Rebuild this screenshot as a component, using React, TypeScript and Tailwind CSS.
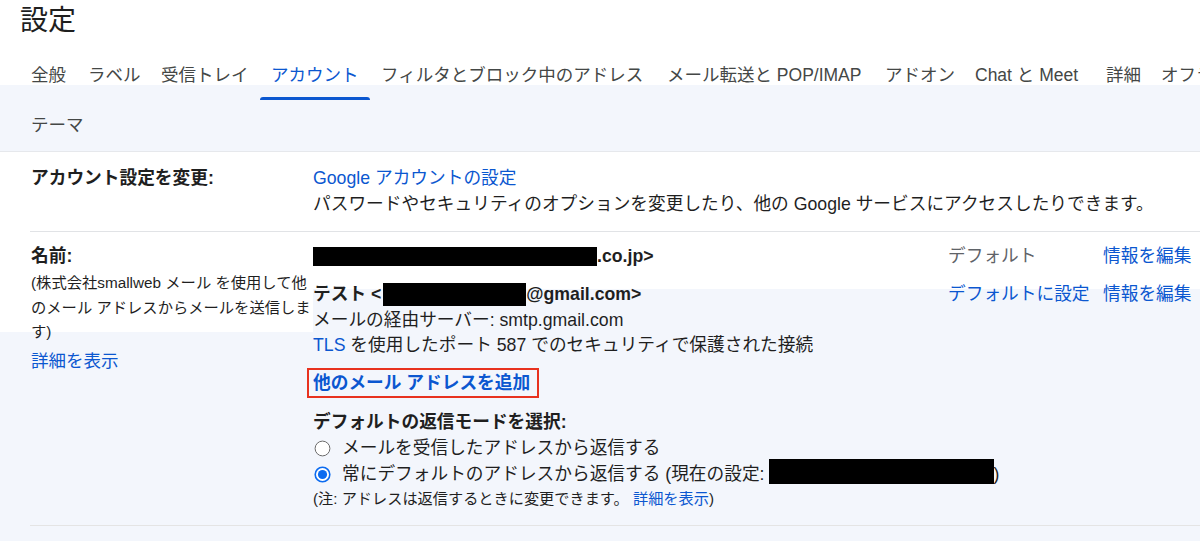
import React from "react";

const tabs: { label: string; w: string; active?: boolean }[] = [
  { label: "全般", w: "w-[57px]" },
  { label: "ラベル", w: "w-[73px]" },
  { label: "受信トレイ", w: "w-[110px]" },
  { label: "アカウント", w: "w-[110px]", active: true },
  { label: "フィルタとブロック中のアドレス", w: "w-[286px]" },
  { label: "メール転送と POP/IMAP", w: "w-[218px]" },
  { label: "アドオン", w: "w-[90px]" },
  { label: "Chat と Meet", w: "w-[131px]" },
  { label: "詳細", w: "w-[55px]" },
  { label: "オフライン", w: "w-[120px]" },
];

function Radio({ checked }: { checked?: boolean }) {
  return (
    <svg width="17" height="17" viewBox="0 0 17 17" className="shrink-0">
      {checked ? (
        <>
          <circle cx="8.5" cy="8.5" r="7.3" fill="#fff" stroke="#0b6bf0" strokeWidth="1.6" />
          <circle cx="8.5" cy="8.5" r="4.6" fill="#0b6bf0" />
        </>
      ) : (
        <circle cx="8.5" cy="8.5" r="7.4" fill="#fff" stroke="#6b6b6b" strokeWidth="1" />
      )}
    </svg>
  );
}

export default function App() {
  return (
    <div
      className="w-[1200px] h-[541px] overflow-hidden bg-[#f3f6fc] text-[#1f1f1f]"
      style={{ fontFamily: '"Liberation Sans", "Noto Sans CJK JP", sans-serif' }}
    >
      {/* Header */}
      <div className="bg-white h-[85px] overflow-hidden">
        <div className="pl-[20px] pt-[7px] text-[28px] leading-[28px] text-[#1f1f1f]">設定</div>
        <div className="flex pl-[20px] mt-[28px] whitespace-nowrap">
          {tabs.map((t) => (
            <div
              key={t.label}
              className={`${t.w} shrink-0 pl-[11px] text-[17.5px] leading-[24px] ${
                t.active ? "text-[#0b57d0]" : "text-[#444746]"
              }`}
            >
              {t.label}
            </div>
          ))}
        </div>
      </div>

      {/* Active tab underline + theme row */}
      <div className="pl-[260px] pt-[12px]">
        <div className="w-[110px] h-[3px] rounded-t-[3px] bg-[#0b57d0]" />
      </div>
      <div className="pl-[31px] pt-[13px] pb-[14px] text-[17.5px] leading-[24px] text-[#444746] border-b border-[#e6e8ec]">
        テーマ
      </div>

      {/* Account settings */}
      <div className="bg-white">
        <div className="flex pt-[13px] pb-[14px]">
          <div className="w-[313px] pl-[31px] text-[17.7px] leading-[26px] font-bold">アカウント設定を変更:</div>
          <div className="flex-1 text-[17.7px] leading-[26px]">
            <div className="text-[#0b57d0]">Google アカウントの設定</div>
            <div className="whitespace-nowrap">パスワードやセキュリティのオプションを変更したり、他の Google サービスにアクセスしたりできます。</div>
          </div>
        </div>
        <div className="ml-[30px] h-px bg-[#e1e3e6]" />
      </div>

      {/* Name section */}
      <div className="bg-[linear-gradient(to_bottom,#ffffff_57px,#f3f6fc_57px)]">
        <div className="flex">
          <div className="w-[313px] bg-[linear-gradient(to_bottom,#ffffff_100px,transparent_100px)] pl-[31px] pt-[12px]">
            <div className="text-[17.7px] leading-[24px] font-bold">名前:</div>
            <div className="mt-[3px] text-[15.3px] leading-[24.5px] whitespace-nowrap">
              (株式会社smallweb メール を使用して他
              <br />
              のメール アドレスからメールを送信しま
              <br />
              す)
            </div>
            <div className="mt-[4px] text-[17.5px] leading-[24px] text-[#0b57d0]">詳細を表示</div>
          </div>

          <div className="flex-1 pt-[12px] pb-[14px]">
            {/* Address 1 */}
            <div className="flex text-[17.7px] leading-[24px]">
              <div className="flex-1 flex items-center font-bold whitespace-nowrap">
                <span className="inline-block w-[284px] h-[19px] bg-black" />
                <span>.co.jp&gt;</span>
              </div>
              <div className="w-[155px] text-[#5f6368]">デフォルト</div>
              <div className="w-[97px] text-[#0b57d0]">情報を編集</div>
            </div>

            {/* Address 2 */}
            <div className="mt-[14px] text-[17.7px] leading-[25.5px]">
              <div className="flex">
                <div className="flex-1 flex items-center font-bold whitespace-nowrap">
                  <span>テスト &lt;</span>
                  <span className="inline-block w-[143px] h-[23px] bg-black ml-[2px]" />
                  <span>@gmail.com&gt;</span>
                </div>
                <div className="w-[155px] text-[#0b57d0] whitespace-nowrap">デフォルトに設定</div>
                <div className="w-[97px] text-[#0b57d0] whitespace-nowrap">情報を編集</div>
              </div>
              <div>メールの経由サーバー: smtp.gmail.com</div>
              <div>
                <span className="text-[#0b57d0]">TLS</span> を使用したポート 587 でのセキュリティで保護された接続
              </div>
            </div>

            {/* Add address (highlighted) */}
            <div className="mt-[9px] ml-[-6px] inline-block border-2 border-[#e8321f] pl-[4px] pr-[7px] text-[17.7px] leading-[26px] font-bold text-[#0b57d0] whitespace-nowrap">
              他のメール アドレスを追加
            </div>

            {/* Reply mode */}
            <div className="mt-[12px] text-[17.7px] leading-[25.5px] font-bold">デフォルトの返信モードを選択:</div>
            <div className="text-[17.7px] leading-[26px]">
              <div className="flex items-center gap-[11px] pl-[1px]">
                <Radio />
                <span>メールを受信したアドレスから返信する</span>
              </div>
              <div className="flex items-center gap-[11px] pl-[1px] whitespace-nowrap">
                <Radio checked />
                <span className="flex items-center">
                  常にデフォルトのアドレスから返信する (現在の設定:
                  <span className="inline-block w-[225px] h-[25px] bg-black ml-[4px] mt-[-5px]" />)
                </span>
              </div>
            </div>
            <div className="text-[15.2px] leading-[24px] whitespace-nowrap">
              (注: アドレスは返信するときに変更できます。 <span className="text-[#0b57d0]">詳細を表示</span>)
            </div>
          </div>
        </div>
        <div className="ml-[30px] h-px bg-[#e4e4e4]" />
      </div>
    </div>
  );
}
